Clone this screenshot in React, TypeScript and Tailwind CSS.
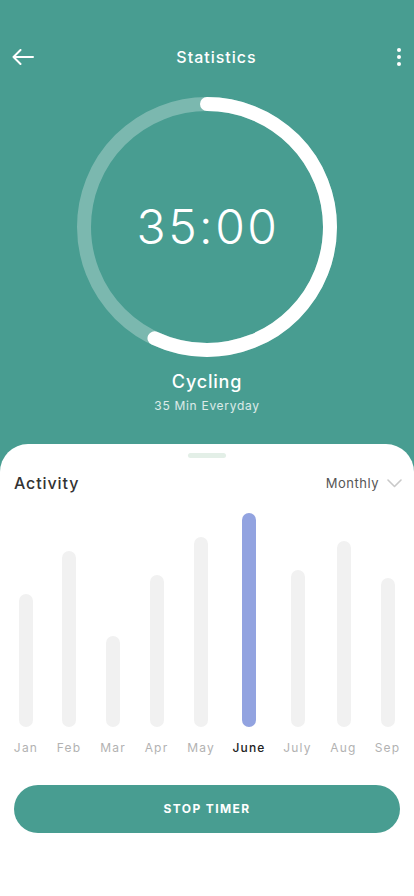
import React from 'react';

const months = [
  { label: 'Jan', col: 'w-[22px]', bar: 'h-[133px]' },
  { label: 'Feb', col: 'w-[24px]', bar: 'h-[176px]' },
  { label: 'Mar', col: 'w-[24px]', bar: 'h-[91px]' },
  { label: 'Apr', col: 'w-[23px]', bar: 'h-[152px]' },
  { label: 'May', col: 'w-[26px]', bar: 'h-[190px]' },
  { label: 'June', col: 'w-[30px]', bar: 'h-[214px]', active: true },
  { label: 'July', col: 'w-[27px]', bar: 'h-[157px]' },
  { label: 'Aug', col: 'w-[25px]', bar: 'h-[186px]' },
  { label: 'Sep', col: 'w-[23px]', bar: 'h-[149px]' },
];

function ProgressRing() {
  const r = 123;
  const circumference = 2 * Math.PI * r;
  const progress = 0.57;
  return (
    <svg width="260" height="260" viewBox="0 0 260 260" className="block">
      <circle cx="130" cy="130" r={r} fill="none" stroke="rgba(255,255,255,0.28)" strokeWidth="14" />
      <circle
        cx="130"
        cy="130"
        r={r}
        fill="none"
        stroke="#ffffff"
        strokeWidth="14"
        strokeLinecap="round"
        strokeDasharray={`${circumference * progress} ${circumference}`}
        transform="rotate(-90 130 130)"
      />
    </svg>
  );
}

export default function App() {
  return (
    <div className="min-h-[896px] w-full bg-[#489d91] font-['Inter','Roboto',sans-serif] flex flex-col">
      {/* Header */}
      <div className="flex items-center justify-between h-6 mt-[45px] pl-3 pr-[13px]">
        <svg width="22" height="16" viewBox="0 0 22 16" fill="none" stroke="white" strokeWidth="2" strokeLinecap="round" strokeLinejoin="round">
          <path d="M21 8H1.5M8.5 1L1.5 8l7 7" />
        </svg>
        <h1 className="text-white text-[16px] font-medium tracking-[1px] pl-[2px]">Statistics</h1>
        <div className="flex flex-col gap-[3px] items-center w-[4px]">
          <span className="w-[4px] h-[4px] rounded-full bg-white"></span>
          <span className="w-[4px] h-[4px] rounded-full bg-white"></span>
          <span className="w-[4px] h-[4px] rounded-full bg-white"></span>
        </div>
      </div>

      {/* Timer ring */}
      <div className="flex justify-center mt-[28px]">
        <div className="relative w-[260px] h-[260px]">
          <ProgressRing />
          <div className="absolute inset-0 flex items-center justify-center">
            <span className="text-white text-[48px] font-light tracking-[2.5px] leading-none pl-[2px]">35:00</span>
          </div>
        </div>
      </div>

      <div className="flex flex-col items-center mt-[13px] text-white">
        <span className="text-[18px] font-medium tracking-[0.8px] leading-6">Cycling</span>
        <span className="text-[12px] tracking-[0.7px] text-white/80 mt-[4px] leading-4">35 Min Everyday</span>
      </div>

      {/* Activity sheet */}
      <div className="flex-1 bg-white rounded-t-[28px] mt-[30px] pt-[9px] pb-10">
        <div className="w-[38px] h-[5px] rounded-full bg-[#e3efe7] mx-auto"></div>

        <div className="flex items-center justify-between pl-[14px] pr-[12px] mt-[13px] h-6">
          <span className="text-[16px] font-medium text-[#333] tracking-[0.9px]">Activity</span>
          <div className="flex items-center gap-[8px] pt-[1px]">
            <span className="text-[13px] text-[#555] tracking-[0.5px]">Monthly</span>
            <svg width="15" height="9" viewBox="0 0 15 9" fill="none" stroke="#c9c9c9" strokeWidth="1.6" strokeLinecap="round" strokeLinejoin="round">
              <path d="M1 1l6.5 6.5L14 1" />
            </svg>
          </div>
        </div>

        <div className="flex gap-5 pl-[15px] mt-[18px]">
          {months.map((m) => (
            <div key={m.label} className={`${m.col} flex flex-col items-center`}>
              <div className="h-[214px] flex items-end">
                <div className={`${m.bar} w-[14px] rounded-full ${m.active ? 'bg-[#92a3e0]' : 'bg-[#f1f1f1]'}`}></div>
              </div>
              <span
                className={`mt-[12px] text-[12px] leading-[18px] tracking-[1.2px] whitespace-nowrap ${
                  m.active ? 'text-[#222] font-medium' : 'text-[#b2b2b2]'
                }`}
              >
                {m.label}
              </span>
            </div>
          ))}
        </div>

        <div className="px-[14px] mt-[28px]">
          <button className="w-full h-12 rounded-full bg-[#489d91] text-white text-[12px] font-bold tracking-[1.4px]">
            STOP TIMER
          </button>
        </div>
      </div>
    </div>
  );
}
